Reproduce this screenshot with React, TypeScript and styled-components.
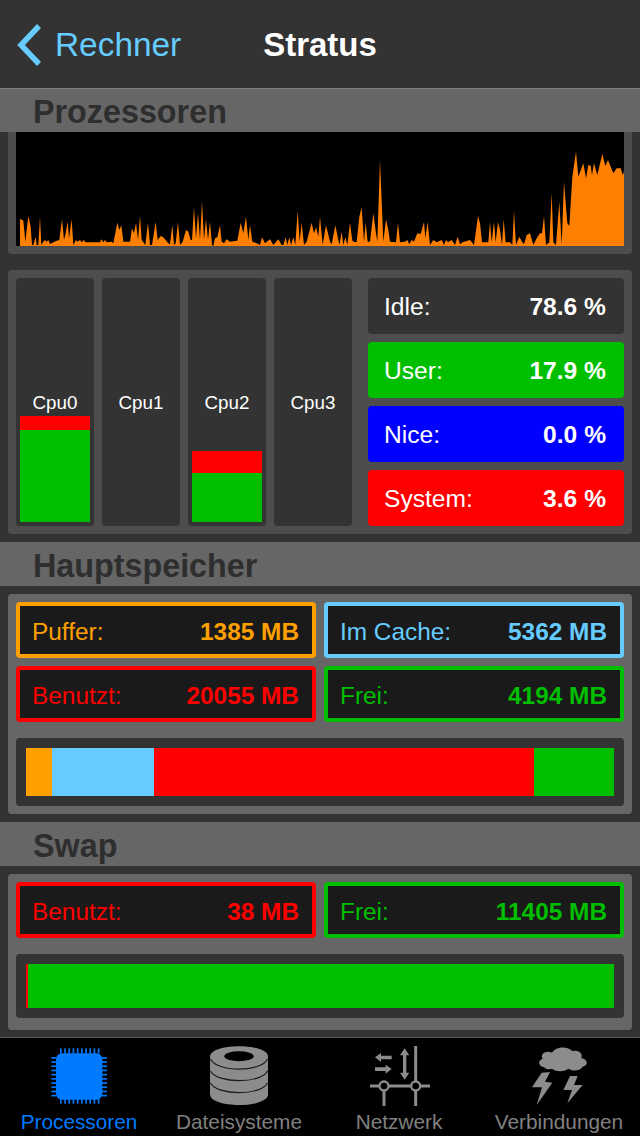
import React from "react";
import styled, { createGlobalStyle } from "styled-components";

const GlobalStyle = createGlobalStyle`
    html, body {
        margin: 0;
        padding: 0;
        background: #333333;
    }
    * {
        box-sizing: border-box;
    }
`;

// load history, in units of 1/3 px, read off the left and right half of the graph
const leftLoad = [
    [60, 656], [70, 662], [76, 725], [85, 648], [92, 680], [96, 735], [100, 735], [107, 710], [110, 735], [115, 735], [120, 650], [124, 735],
    [130, 725], [135, 720], [140, 725], [145, 720], [150, 732], [170, 722], [178, 720], [186, 658], [192, 720], [197, 700], [203, 665], [207, 715],
    [215, 658], [220, 735], [228, 720], [232, 725], [240, 720], [245, 727], [252, 720], [256, 727], [300, 727], [304, 718], [310, 727], [315, 720],
    [320, 727], [335, 725], [340, 730], [352, 668], [358, 690], [364, 676], [370, 725], [390, 725], [396, 685], [402, 700], [408, 668], [414, 720],
    [420, 648], [425, 720], [436, 735], [444, 668], [450, 735], [456, 735], [467, 666], [473, 720], [482, 708], [490, 712], [505, 730], [510, 733],
    [517, 676], [522, 735], [527, 730], [534, 666], [540, 735], [548, 725], [558, 690], [565, 695], [572, 720], [576, 720], [582, 622], [588, 715],
    [594, 640], [600, 720], [606, 604], [612, 720], [618, 658], [624, 720], [630, 665], [636, 735], [640, 738], [645, 715], [652, 712], [660, 676],
    [665, 725], [672, 730], [680, 718], [690, 725], [712, 722], [722, 668], [730, 700], [738, 650], [745, 720], [750, 675], [757, 725], [770, 730],
    [780, 735], [786, 712], [795, 730], [810, 718], [820, 735], [835, 718], [845, 735], [850, 735], [857, 712], [862, 735], [868, 712], [873, 735],
    [880, 712], [886, 735], [893, 632], [899, 725], [905, 668], [912, 735], [920, 725], [935, 668], [942, 700], [948, 682], [955, 710],
];

const rightLoad = [
    [0, 650], [8, 735], [18, 676], [30, 725], [35, 733], [46, 676], [58, 735], [65, 695], [70, 735], [76, 712], [82, 735], [90, 668],
    [97, 722], [105, 727], [110, 725], [118, 650], [125, 622], [132, 725], [137, 668], [143, 725], [150, 725], [160, 640], [168, 700], [172, 725],
    [180, 480], [190, 725], [198, 658], [205, 690], [210, 725], [228, 727], [234, 668], [240, 727], [255, 725], [262, 720], [268, 733], [275, 720],
    [282, 725], [292, 700], [302, 702], [312, 666], [316, 715], [323, 666], [330, 735], [340, 720], [350, 727], [365, 720], [372, 735], [378, 720],
    [384, 727], [395, 720], [405, 735], [413, 710], [420, 733], [428, 727], [450, 720], [462, 735], [474, 648], [480, 670], [486, 727], [505, 727],
    [510, 666], [515, 727], [522, 666], [527, 727], [534, 666], [540, 690], [546, 735], [551, 658], [557, 727], [570, 727], [577, 735], [582, 632],
    [588, 735], [598, 710], [606, 725], [612, 733], [620, 705], [630, 700], [640, 735], [650, 715], [660, 700], [666, 700], [672, 648], [678, 735],
    [688, 727], [695, 578], [700, 727], [708, 735], [718, 605], [725, 735], [732, 545], [742, 670], [748, 678], [757, 530], [768, 455], [775, 530],
    [790, 490], [798, 535], [805, 495], [812, 497], [816, 525], [822, 490], [832, 525], [847, 462], [856, 498], [864, 480], [880, 520], [890, 505],
    [902, 505], [908, 525], [912, 515],
];

const loadPoints = [
    "60,738",
    ...leftLoad.map(([x, y]) => `${x},${y}`),
    ...rightLoad.map(([x, y]) => `${x + 960},${y}`),
    "1872,738",
].join(" ");

const cpus = [
    { name: "Cpu0", user: 92, system: 14 },
    { name: "Cpu1", user: 0, system: 0 },
    { name: "Cpu2", user: 49, system: 22 },
    { name: "Cpu3", user: 0, system: 0 },
];

const stats = [
    { label: "Idle:", value: "78.6 %", color: "#333333" },
    { label: "User:", value: "17.9 %", color: "#00bf00" },
    { label: "Nice:", value: "0.0 %", color: "#0000ff" },
    { label: "System:", value: "3.6 %", color: "#ff0000" },
];

const ORANGE = "#ffa000";
const SKY = "#66ccff";
const RED = "#ff0000";
const GREEN = "#00bf00";

const memory = [
    { label: "Puffer:", value: "1385 MB", color: ORANGE, width: 26 },
    { label: "Im Cache:", value: "5362 MB", color: SKY, width: 102 },
    { label: "Benutzt:", value: "20055 MB", color: RED, width: 380 },
    { label: "Frei:", value: "4194 MB", color: GREEN, width: 80 },
];

const swap = [
    { label: "Benutzt:", value: "38 MB", color: RED, width: 2 },
    { label: "Frei:", value: "11405 MB", color: GREEN, width: 586 },
];

const pinSteps = [0, 1, 2, 3, 4, 5, 6, 7, 8, 9];

const ChipIcon = () => (
    <TabSvg viewBox="144 48 192 180">
        <g fill="#007aff">
            <rect x="168" y="70" width="139" height="139" rx="18" />
            {pinSteps.map((i) => (
                <React.Fragment key={i}>
                    <rect x={180 + i * 12.6} y="55" width="5" height="16" />
                    <rect x={180 + i * 12.6} y="207" width="5" height="14" />
                    <rect x="154" y={81 + i * 12.6} width="15" height="5" />
                    <rect x="306" y={81 + i * 12.6} width="15" height="5" />
                </React.Fragment>
            ))}
        </g>
    </TabSvg>
);

const DiskIcon = () => (
    <TabSvg viewBox="624 48 192 180">
        <path d="M630 80 C630 38 804 38 804 80 V193 C804 236 630 236 630 193 Z" fill="#8c8c8c" />
        <ellipse cx="717" cy="79" rx="44" ry="15" fill="#000000" />
        <g fill="none" stroke="#1c1c1c" strokeWidth="3.5">
            <path d="M631 86 C650 128 785 128 803 86" />
            <path d="M631 122 C650 162 785 162 803 122" />
            <path d="M631 158 C650 198 785 198 803 158" />
        </g>
    </TabSvg>
);

const NetworkIcon = () => (
    <TabSvg viewBox="144 48 192 180">
        <g fill="#8c8c8c">
            <path d="M165 82 L183 69 V77 H215 V88 H183 V96 Z" />
            <path d="M215 117 L197 104 V112 H165 V123 H197 V131 Z" />
            <path d="M254 55 L268 76 H259 V128 H268 L254 149 L240 128 H249 V76 H240 Z" />
        </g>
        <g stroke="#8c8c8c" strokeWidth="9" fill="none">
            <path d="M287 48 V154" />
            <path d="M287 182 V228" />
            <path d="M192 182 V228" />
            <path d="M150 168 H178" />
            <path d="M206 168 H273" />
            <path d="M301 168 H330" />
            <circle cx="192" cy="168" r="13.5" strokeWidth="7" />
            <circle cx="287" cy="168" r="13.5" strokeWidth="7" />
        </g>
    </TabSvg>
);

const StormIcon = () => (
    <TabSvg viewBox="624 48 192 180">
        <g fill="#8c8c8c">
            <path d="M672 112 C655 108 652 92 668 86 C658 72 680 60 696 68 C708 48 745 48 758 64 C776 58 790 72 784 84 C804 88 806 106 788 110 C778 124 758 124 746 116 C730 126 708 126 696 116 C688 120 678 118 672 112 Z" />
            <path d="M665 128 L690 126 L675 155 L697 158 L650 225 L666 172 L636 172 Z" />
            <path d="M750 138 L773 138 L762 165 L788 165 L742 220 L756 180 L730 180 Z" />
        </g>
    </TabSvg>
);

const tabs = [
    { label: "Processoren", icon: <ChipIcon />, active: true },
    { label: "Dateisysteme", icon: <DiskIcon />, active: false },
    { label: "Netzwerk", icon: <NetworkIcon />, active: false },
    { label: "Verbindungen", icon: <StormIcon />, active: false },
];

interface Reading {
    label: string;
    value: string;
    color: string;
    width: number;
}

const Readings = ({ items }: { items: Reading[] }) => (
    <ReadingGrid>
        {items.map((item) => (
            <ReadingBox key={item.label} $color={item.color}>
                <span>{item.label}</span>
                <strong>{item.value}</strong>
            </ReadingBox>
        ))}
    </ReadingGrid>
);

const UsageBar = ({ items, height }: { items: Reading[]; height: number }) => (
    <BarTrack>
        <BarFill $height={height}>
            {items.map((item) => (
                <BarSegment key={item.label} $color={item.color} $width={item.width} />
            ))}
        </BarFill>
    </BarTrack>
);

const App = () => {
    return (
        <Screen>
            <GlobalStyle />
            <NavBar>
                <BackLink>
                    <svg width="26" height="44" viewBox="0 0 26 44">
                        <path d="M23 3 L5 22 L23 41" fill="none" stroke="#66ccff" strokeWidth="5.5" />
                    </svg>
                    <BackLabel>Rechner</BackLabel>
                </BackLink>
                <NavTitle>Stratus</NavTitle>
            </NavBar>

            <SectionHeader>Prozessoren</SectionHeader>
            <GraphPanel>
                <svg width="608" height="114" viewBox="48 396 1824 342" style={{ display: "block" }}>
                    <rect x="48" y="396" width="1824" height="342" fill="#000000" />
                    <polygon points={loadPoints} fill="#ff8000" />
                </svg>
            </GraphPanel>

            <CpuPanel>
                <CpuColumns>
                    {cpus.map((cpu) => (
                        <CpuColumn key={cpu.name}>
                            <CpuName>{cpu.name}</CpuName>
                            <CpuStack>
                                <CpuLevel $color={RED} $height={cpu.system} />
                                <CpuLevel $color={GREEN} $height={cpu.user} />
                            </CpuStack>
                        </CpuColumn>
                    ))}
                </CpuColumns>
                <StatList>
                    {stats.map((stat) => (
                        <StatRow key={stat.label} $color={stat.color}>
                            <span>{stat.label}</span>
                            <strong>{stat.value}</strong>
                        </StatRow>
                    ))}
                </StatList>
            </CpuPanel>

            <SectionHeader>Hauptspeicher</SectionHeader>
            <MemoryPanel $bottom={8}>
                <Readings items={memory} />
                <UsageBar items={memory} height={48} />
            </MemoryPanel>

            <SectionHeader>Swap</SectionHeader>
            <MemoryPanel $bottom={12}>
                <Readings items={swap} />
                <UsageBar items={swap} height={44} />
            </MemoryPanel>

            <TabBar>
                {tabs.map((tab) => (
                    <TabItem key={tab.label} $active={tab.active}>
                        {tab.icon}
                        <TabLabel>{tab.label}</TabLabel>
                    </TabItem>
                ))}
            </TabBar>
        </Screen>
    );
};

export default App;

// Styled components
const Screen = styled.div`
    display: flex;
    flex-direction: column;
    width: 640px;
    height: 1136px;
    overflow: hidden;
    background-color: #333333;
    font-family: "Liberation Sans", Arial, sans-serif;
`;

const NavBar = styled.header`
    position: relative;
    display: flex;
    align-items: center;
    justify-content: center;
    flex: 0 0 89px;
    margin-bottom: -1px;
    padding-top: 2px;
    border-bottom: 1px solid #808080;
    background-color: #333333;
    z-index: 1;
`;

const BackLink = styled.div`
    position: absolute;
    left: 16px;
    top: 23px;
    display: flex;
    align-items: center;
    gap: 13px;
`;

const BackLabel = styled.span`
    font-size: 33.4px;
    color: #66ccff;
`;

const NavTitle = styled.h1`
    margin: 0;
    font-size: 33px;
    font-weight: bold;
    color: #ffffff;
`;

const SectionHeader = styled.h2`
    flex: 0 0 44px;
    min-height: 0;
    margin: 0;
    padding-left: 33px;
    background-color: #666666;
    font-size: 32.3px;
    line-height: 48px;
    font-weight: bold;
    color: #2e2e2e;
`;

const GraphPanel = styled.section`
    margin: 0 8px 16px;
    padding: 0 8px 8px;
    border-radius: 0 0 4px 4px;
    background-color: #4d4d4d;
`;

const CpuPanel = styled.section`
    display: flex;
    justify-content: space-between;
    flex: 0 0 264px;
    margin: 0 8px 8px;
    padding: 8px;
    border-radius: 4px;
    background-color: #4d4d4d;
`;

const CpuColumns = styled.div`
    display: flex;
    gap: 8px;
`;

const CpuColumn = styled.div`
    display: flex;
    flex-direction: column;
    width: 78px;
    padding: 113px 4px 4px;
    border-radius: 4px;
    background-color: #333333;
`;

const CpuName = styled.div`
    font-size: 18.8px;
    line-height: 23px;
    text-align: center;
    color: #ffffff;
`;

const CpuStack = styled.div`
    display: flex;
    flex-direction: column;
    margin-top: auto;
`;

const CpuLevel = styled.div<{ $color: string; $height: number }>`
    height: ${(props) => props.$height}px;
    background-color: ${(props) => props.$color};
`;

const StatList = styled.div`
    display: flex;
    flex-direction: column;
    gap: 8px;
    width: 256px;
`;

const StatRow = styled.div<{ $color: string }>`
    display: flex;
    align-items: center;
    justify-content: space-between;
    height: 56px;
    padding: 2px 18px 0 16px;
    border-radius: 4px;
    background-color: ${(props) => props.$color};
    font-size: 24.6px;
    color: #ffffff;
`;

const MemoryPanel = styled.section<{ $bottom: number }>`
    margin: 8px 8px 0;
    padding: 8px 8px ${(props) => props.$bottom}px;
    border-radius: 4px;
    background-color: #666666;

    & + h2 {
        margin-top: 8px;
    }
`;

const ReadingGrid = styled.div`
    display: grid;
    grid-template-columns: 300px 300px;
    gap: 8px;
`;

const ReadingBox = styled.div<{ $color: string }>`
    display: flex;
    align-items: center;
    justify-content: space-between;
    height: 56px;
    padding: 4px 13px 0 12px;
    border: 4px solid ${(props) => props.$color};
    border-radius: 4px;
    background-color: #1a1a1a;
    font-size: 24.4px;
    color: ${(props) => props.$color};
`;

const BarTrack = styled.div`
    margin-top: 16px;
    padding: 10px;
    border-radius: 4px;
    background-color: #333333;
`;

const BarFill = styled.div<{ $height: number }>`
    display: flex;
    height: ${(props) => props.$height}px;
`;

const BarSegment = styled.div<{ $color: string; $width: number }>`
    width: ${(props) => props.$width}px;
    background-color: ${(props) => props.$color};
`;

const TabBar = styled.nav`
    display: flex;
    flex: 0 0 99px;
    margin-top: auto;
    border-top: 1px solid #5a5a5a;
    background-color: #000000;
`;

const TabItem = styled.div<{ $active: boolean }>`
    display: flex;
    flex-direction: column;
    align-items: center;
    width: 160px;
    padding-top: 8px;
    font-size: 20.8px;
    line-height: 24px;
    color: ${(props) => (props.$active ? "#007aff" : "#808080")};
`;

const TabSvg = styled.svg`
    display: block;
    flex: none;
    width: 64px;
    height: 60px;
    margin-bottom: 4px;
`;

const TabLabel = styled.span`
    margin-right: 2px;
`;
